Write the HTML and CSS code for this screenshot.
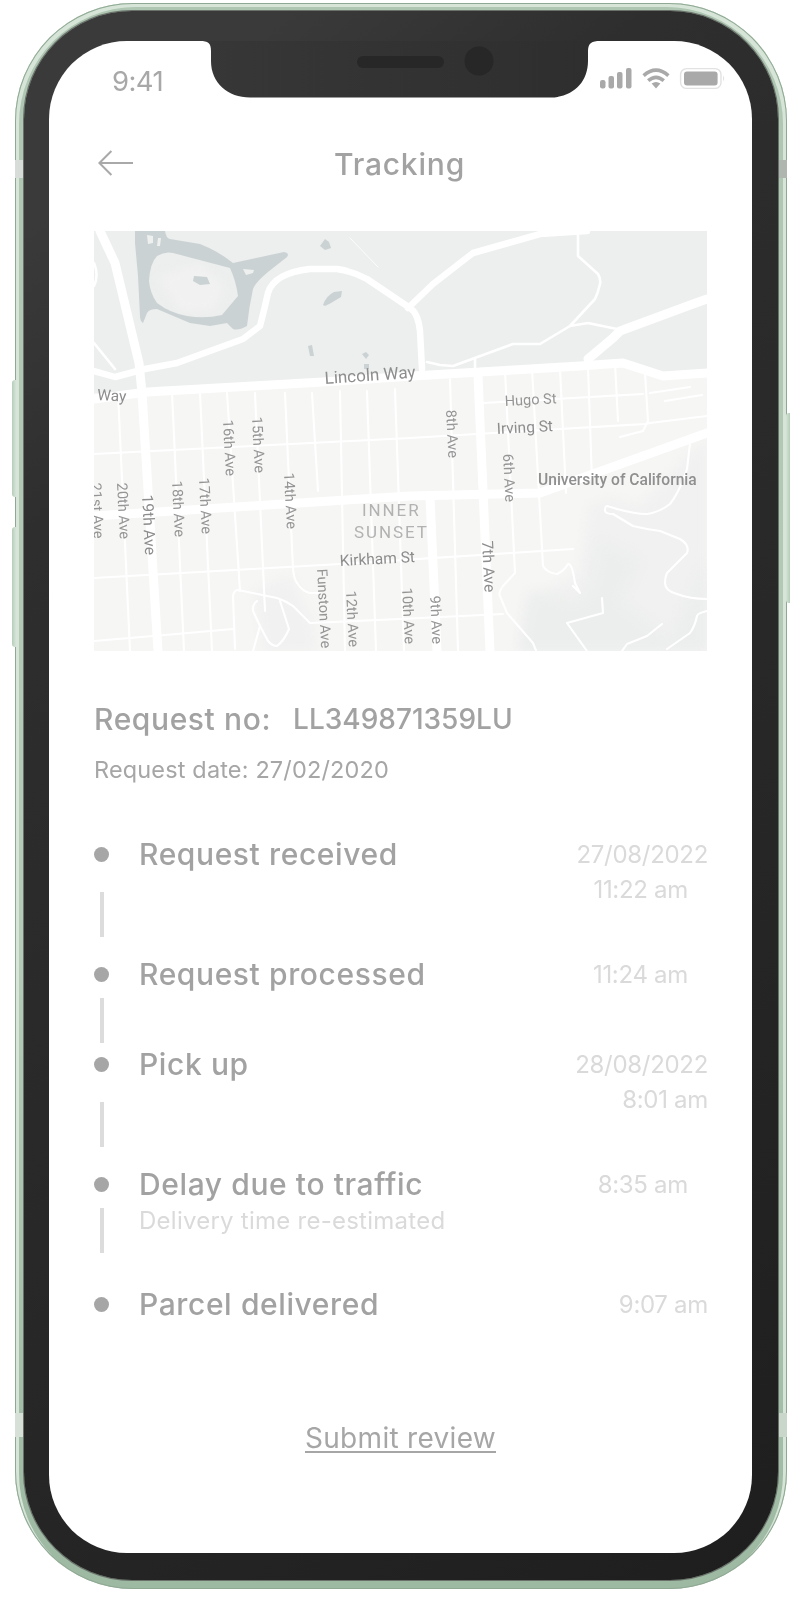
FILE: index.html
```html
<!DOCTYPE html>
<html lang="en">
<head>
<meta charset="utf-8">
<title>Tracking</title>
<link rel="stylesheet" href="styles.css">
</head>
<body>
<div class="phone">
  <span class="btn btn-l1"></span>
  <span class="btn btn-l2"></span>
  <span class="btn btn-r1"></span>
  <span class="band band-lt"></span>
  <span class="band band-lb"></span>
  <span class="band band-rt"></span>
  <span class="band band-rb"></span>
  <div class="bezel">
    <div class="screen">
      <svg class="notch" viewBox="200 40 400 58" width="400" height="58" aria-hidden="true">
        <defs>
          <linearGradient id="ng" x1="0" x2="1" y1="0" y2="0">
            <stop offset="0" stop-color="#373737"/>
            <stop offset="1" stop-color="#2e2e2e"/>
          </linearGradient>
        </defs>
        <path fill="url(#ng)" d="M200 40 H600 C592 40 588 42 588 50 V60 C588 82 572 96.5 550 96.5 H250 C228 96.5 211 82 211 60 V50 C211 42 208 40 200 40 Z"/>
        <rect x="357" y="55" width="87" height="12" rx="6" fill="#272727"/>
        <circle cx="479" cy="60" r="14.5" fill="#272727"/>
      </svg>

      <div class="status">
        <span class="clock">9:41</span>
        <svg class="status-icons" viewBox="600 66 126 24" width="126" height="24" aria-hidden="true">
          <g class="ico-fill">
            <rect x="600" y="80" width="5.5" height="8.5" rx="2.2"/>
            <rect x="608.5" y="76" width="5.5" height="12.5" rx="2"/>
            <rect x="617" y="72" width="5.5" height="16.5" rx="2"/>
            <rect x="626" y="68" width="5.5" height="20.5" rx="2"/>
            <path d="M651.6 83.6 Q656 80.6 660.4 83.6 L656 88.6 Z"/>
          </g>
          <g class="ico-stroke">
            <path d="M643.6 75.6 Q656 64.8 668.4 75.6"/>
            <path d="M648.2 80.6 Q656 74 663.8 80.6"/>
          </g>
          <rect class="batt-shell" x="680.6" y="68.6" width="40.4" height="19.8" rx="6"/>
          <rect class="ico-fill" x="684" y="71.6" width="33.6" height="13.8" rx="3"/>
          <path class="batt-nub" d="M723 75.6 Q725.4 78.5 723 81.4 Z"/>
        </svg>
      </div>

      <header class="topbar">
        <svg class="back" viewBox="0 0 36 26" width="36" height="26" aria-hidden="true">
          <path d="M35 13 H1.4 M13.4 1 L1.4 13 L13.4 25"/>
        </svg>
        <h1 class="title">Tracking</h1>
      </header>

      <svg class="map" viewBox="94 230 613 420" width="613" height="420" role="img" aria-label="Map">
        <rect class="m-park" x="94" y="230" width="613" height="420"/>
        <path class="m-land" d="M94 392 L147 391 L323 381 L413 375 L580 365 L623 362 L663 375 L707 372 V650 H94 Z"/>
        <path class="m-hill" d="M590 505 L612 498 L640 505 L690 452 L707 440 V650 H520 L528 600 L580 572 Z"/>
        <path class="m-hill2" d="M600 540 L640 560 L620 600 L670 640 L707 560 V650 H560 L545 620 L590 590 Z M530 590 L570 600 L590 620 L560 650 H520 Z"/>
        <path class="m-hill" d="M255 590 L290 576 L312 620 L315 650 L265 650 Z"/>
        <path class="m-hill" d="M157 275 L200 262 L225 285 L215 310 L180 312 Z"/>

        <path class="m-water" fill-rule="evenodd" d="M135 230 L165 230 Q166 237 170 238 L200 243 Q218 250 233 262 L284 251 Q290 252 287 256 L273 267 Q256 280 253 288 Q249 306 247 325 Q238 330 233 328 L227 322 L210 325 L190 322 L157 308 Q149 308 147 312 L143 322 Q140 320 140 315 L138 275 L135 242 Z M149 280 Q150 262 157 255 Q165 250 173 252 L230 267 Q236 280 238 295 L222 314 Q205 318 187 315 Q170 312 157 302 Q150 292 149 280 Z"/>
        <path class="m-water" d="M194 275 L207 276 L210 283 L200 284 L193 280 Z M323 304 Q326 295 334 291 L342 290 L341 296 L331 302 L325 305 Z M308 345 L312 344 L314 355 L310 355 Z M362 353 L366 351 L369 354 L366 358 Z M364 363 L369 363 L369 368 L364 368 Z M325 238 L329 241 L331 247 L325 249 L320 245 Z"/>
        <path class="m-hole" d="M147 234 L153 235 L153 242 L148 243 Z M158 237 L161 237 L160 245 L157 245 Z M243 268 L254 269 L253 272 L246 274 Z"/>

        <g class="r-thin">
          <path d="M94 342 L115 368"/>
          <path d="M94 262 Q99 274 94 285"/>
          <path d="M578 230 V255 L598 273 Q601 278 600 283 Q598 292 595 298 L570 325 L540 343 L513 343 L453 365 L440 364 L427 361"/>
          <path d="M570 325 L588 322 L617 328"/>
          <path d="M475 358 V366"/>
        </g>
        <path class="r-hair" d="M350 237 L378 266"/>
        <g class="r-mid">
          <path d="M94 370 L115 376 L145 368 L177 362 L243 338 L260 325 Q264 310 268 292 Q274 272 310 268 H337 Q352 270 367 278 L410 307 Q418 312 420 330 L422 368"/>
          <path d="M408 307 L433 283 L460 262 L473 252 L540 233 L587 230"/>
        </g>
        <g class="r-avenue">
          <path d="M118 392 L130 650"/>
          <path d="M172 392 L184 650"/>
          <path d="M200 392 L212 650"/>
          <path d="M227 392 L240 590"/>
          <path d="M255 392 L265 610"/>
          <path d="M285 392 L293 568 Q294 578 297 582 Q303 591 310 592 L320 592"/>
          <path d="M312 392 L318 490"/>
          <path d="M340 390 L345 650"/>
          <path d="M367 390 L376 650"/>
          <path d="M395 388 L404 650"/>
          <path d="M450 378 L458 650"/>
          <path d="M505 370 L515 572 L503 585 Q498 592 500 595 L507 612 L533 642 L537 652"/>
          <path d="M532 368 L543 565 Q547 572 557 573 Q564 570 568 563 Q572 562 575 582 L580 592 L573 585"/>
          <path d="M560 368 L566 492"/>
          <path d="M588 366 L592 480"/>
          <path d="M615 362 L618 420"/>
          <path d="M645 372 L648 420 L643 430 L620 436"/>
          <path d="M483 402 L643 393"/>
          <path d="M94 453 L410 437 L560 428 L645 423 L650 422 L707 415"/>
          <path d="M94 577 L340 563 L573 548"/>
          <path d="M94 640 L165 634 L233 628"/>
          <path d="M310 622 L400 618 L503 613"/>
          <path d="M235 648 L233 595 Q234 589 238 589 L277 597 Q286 600 293 605 L310 622"/>
          <path d="M257 600 Q252 604 253 610 L260 625 L253 650"/>
          <path d="M280 600 L289 628 Q284 640 277 645 Q272 645 268 640 L260 625"/>
          <path d="M707 598 Q690 598 677 593 Q665 590 665 582 Q665 576 667 572 L687 552 Q690 544 680 538 L660 530 Q645 528 633 525 L613 513 Q606 513 605 510 Q605 505 607 505 L617 508 Q635 513 647 513 Q660 511 670 503 Q680 490 687 468 L690 442"/>
          <path d="M602 597 L603 612 L567 622 L587 650"/>
          <path d="M662 623 L647 635 L627 643 L622 650"/>
          <path d="M707 610 Q698 612 697 615 Q695 625 690 632 L667 648"/>
          <path d="M650 392 L690 386"/>
          <path d="M665 400 L702 394"/>
        </g>
        <g class="r-wide">
          <path d="M100 230 L115 262 L139 362 L142 392 L158 650"/>
          <path d="M94 515 L410 495 L540 492 L707 432"/>
          <path d="M430 497 L437 650"/>
          <path d="M478 375 L490 650"/>
          <path d="M94 398 L147 391 L323 381 L413 375 L580 365 L623 362 L663 375 L707 372"/>
          <path d="M588 358 L613 337 L620 330 L693 303 L707 298"/>
        </g>

        <g class="lbl">
          <text transform="translate(325 383) rotate(-4)" class="lbl-lg">Lincoln Way</text>
          <text transform="translate(97 399) rotate(3)">Way</text>
          <text transform="translate(505 405) rotate(-3)" class="lbl-sm">Hugo St</text>
          <text transform="translate(497 433) rotate(-3)">Irving St</text>
          <text x="538" y="484" class="lbl-strong">University of California</text>
          <text transform="translate(340 565) rotate(-3)">Kirkham St</text>
          <text x="362" y="515" class="lbl-area">INNER</text>
          <text x="354" y="537" class="lbl-area">SUNSET</text>
          <text transform="translate(223 419) rotate(87)" class="lbl-sm">16th Ave</text>
          <text transform="translate(252 416) rotate(87)" class="lbl-sm">15th Ave</text>
          <text transform="translate(284 472) rotate(87)" class="lbl-sm">14th Ave</text>
          <text transform="translate(446 409) rotate(87)" class="lbl-sm">8th Ave</text>
          <text transform="translate(503 453) rotate(87)" class="lbl-sm">6th Ave</text>
          <text transform="translate(199 477) rotate(87)" class="lbl-sm">17th Ave</text>
          <text transform="translate(172 480) rotate(87)" class="lbl-sm">18th Ave</text>
          <text transform="translate(142 494) rotate(87)">19th Ave</text>
          <text transform="translate(117 482) rotate(87)" class="lbl-sm">20th Ave</text>
          <text transform="translate(91 482) rotate(87)" class="lbl-sm">21st Ave</text>
          <text transform="translate(317 568) rotate(87)" class="lbl-sm">Funston Ave</text>
          <text transform="translate(346 590) rotate(87)" class="lbl-sm">12th Ave</text>
          <text transform="translate(402 587) rotate(87)" class="lbl-sm">10th Ave</text>
          <text transform="translate(430 595) rotate(87)" class="lbl-sm">9th Ave</text>
          <text transform="translate(482 540) rotate(87)">7th Ave</text>
        </g>
      </svg>

      <div class="req-no"><span class="req-label">Request no:</span><span>LL349871359LU</span></div>
      <p class="req-date">Request date: 27/02/2020</p>

      <ol class="steps">
        <li class="step step-a">
          <div class="rail"><span class="dot"></span><span class="line gap-l"></span></div>
          <div class="body"><div class="step-title">Request received</div></div>
          <div class="time"><div>27/08/2022</div><div class="inset">11:22 am</div></div>
        </li>
        <li class="step step-b">
          <div class="rail"><span class="dot"></span><span class="line"></span></div>
          <div class="body"><div class="step-title">Request processed</div></div>
          <div class="time"><div class="inset">11:24 am</div></div>
        </li>
        <li class="step step-a">
          <div class="rail"><span class="dot"></span><span class="line gap-l"></span></div>
          <div class="body"><div class="step-title">Pick up</div></div>
          <div class="time"><div>28/08/2022</div><div>8:01 am</div></div>
        </li>
        <li class="step step-a">
          <div class="rail"><span class="dot"></span><span class="line"></span></div>
          <div class="body">
            <div class="step-title">Delay due to traffic</div>
            <div class="step-sub">Delivery time re-estimated</div>
          </div>
          <div class="time"><div class="inset">8:35 am</div></div>
        </li>
        <li class="step">
          <div class="rail"><span class="dot"></span></div>
          <div class="body"><div class="step-title">Parcel delivered</div></div>
          <div class="time"><div>9:07 am</div></div>
        </li>
      </ol>

      <a class="review" href="#">Submit review</a>
    </div>
  </div>
</div>
</body>
</html>
```

FILE: styles.css
```css
* { box-sizing: border-box; }
html, body { margin: 0; padding: 0; background: #fff; }
body {
  width: 799px;
  height: 1599px;
  overflow: hidden;
  font-family: "Inter", "Liberation Sans", sans-serif;
  color: #a8a8a8;
}

/* device */
.phone {
  position: relative;
  width: 772px;
  height: 1586px;
  margin: 3px 0 0 15px;
  padding: 8px 9px 9px 9px;
  border-radius: 118px;
  background: linear-gradient(180deg, #aec6b2 0%, #b3cbb7 60%, #9db9a2 100%);
  box-shadow: inset 0 0 0 1px #8fa893, inset 3px 3px 0 1px #d6e5d8, inset -3px 3px 0 1px #d6e5d8;
}
.bezel {
  height: 100%;
  padding: 29.5px 26px 27px 25px;
  border-radius: 108px;
  background: linear-gradient(140deg, #3a3a3a 10%, #2e2e2e 24%, #272727 62%, #1e1e1e 100%);
  box-shadow: 0 0 0 1px #6a716b;
}
.btn {
  position: absolute;
  width: 4px;
  background: linear-gradient(90deg, #b5cdb9, #d6e4d7);
}
.btn-l1 { left: -3px; top: 377px; height: 117px; border-radius: 3px 0 0 3px; }
.btn-l2 { left: -3px; top: 524px; height: 120px; border-radius: 3px 0 0 3px; }
.btn-r1 { right: -3px; top: 410px; height: 190px; border-radius: 0 3px 3px 0; transform: scaleX(-1); }
.band { position: absolute; width: 8px; }
.band-lt { left: 0; top: 157px; height: 18px; background: #d8dcd8; }
.band-lb { left: 0; top: 1410px; height: 24px; background: #d6e0d7; }
.band-rt { right: 0; top: 157px; height: 18px; background: #aeb6af; }
.band-rb { right: 0; top: 1410px; height: 24px; background: #c9d6ca; }

.screen {
  position: relative;
  height: 100%;
  padding: 0 45px;
  border-radius: 78px;
  background: #fff;
  overflow: hidden;
  filter: blur(0.3px);
}
.notch { position: absolute; left: 151px; top: 0; }

/* status bar */
.status {
  display: flex;
  justify-content: space-between;
  align-items: flex-start;
  height: 60px;
  margin: 0 -19px 0 18px;
}
.clock {
  margin-top: 24px;
  font-size: 27.5px;
  line-height: 33px;
  letter-spacing: -0.6px;
}
.status-icons { margin-top: 25px; }
.ico-fill { fill: #a9a9a9; }
.ico-stroke { fill: none; stroke: #a9a9a9; stroke-width: 3.6; }
.batt-shell { fill: none; stroke: #e2e2e2; stroke-width: 1.4; }
.batt-nub { fill: #e2e2e2; }

/* header */
.topbar {
  position: relative;
  display: flex;
  justify-content: center;
  align-items: center;
  height: 40px;
  margin-top: 43px;
}
.back {
  position: absolute;
  left: 4px;
  top: 6px;
  fill: none;
  stroke: #a9a9a9;
  stroke-width: 2;
}
.title {
  margin: 0 2px 0 0;
  font-size: 30px;
  line-height: 40px;
  font-weight: 500;
  color: #a2a2a2;
  letter-spacing: 0.8px;
}

/* map */
.map {
  display: block;
  margin-top: 47px;
  filter: blur(0.3px);
}
.m-park { fill: #edeeee; }
.m-land { fill: #f6f6f5; }
.m-hill { fill: #f0f1f0; filter: blur(5px); }
.m-hill2 { fill: #ecEeed; filter: blur(6px); }
.m-water { fill: #cbd2d3; }
.m-hole { fill: #eef0ef; }
.r-wide, .r-mid, .r-thin, .r-avenue, .r-hair { fill: none; stroke: #fff; stroke-linejoin: round; stroke-linecap: round; }
.r-wide { stroke-width: 9; }
.r-mid { stroke-width: 6.5; }
.r-thin { stroke-width: 2.6; }
.r-avenue { stroke-width: 2.1; }
.r-hair { stroke-width: 1; opacity: 0.8; }
.lbl text {
  font-family: "Roboto", "Liberation Sans", sans-serif;
  font-size: 15.5px;
  fill: #8d8d8d;
}
.lbl .lbl-lg { font-size: 17px; }
.lbl .lbl-sm { font-size: 14.5px; fill: #959595; }
.lbl .lbl-strong { font-size: 15.6px; font-weight: 500; fill: #8f8f8f; }
.lbl .lbl-area { font-size: 17px; letter-spacing: 1.9px; fill: #b2b2b2; }

/* request */
.req-no {
  display: flex;
  gap: 22px;
  margin-top: 48px;
  font-size: 28px;
  line-height: 40px;
  font-weight: 500;
  color: #a2a2a2;
}
.req-label { font-size: 30px; letter-spacing: 0.6px; }
.req-date {
  margin: 16px 0 0;
  font-size: 23.5px;
  line-height: 30px;
  letter-spacing: 0.15px;
  color: #a6a6a6;
}

/* timeline */
.steps {
  margin: 52px 0 0;
  padding: 0;
  list-style: none;
}
.step {
  display: grid;
  grid-template-columns: 45px 1fr 170px;
  height: 120px;
}
.step-b { height: 90px; }
.rail { display: flex; flex-direction: column; padding-top: 10px; }
.dot { width: 15px; height: 15px; border-radius: 50%; background: #a6a6a6; }
.line { width: 4px; height: 45px; margin: 16px 0 0 5.5px; background: #dcdcdc; }
.line.gap-l { margin-top: 30px; }
.step-title {
  font-size: 30px;
  line-height: 35px;
  font-weight: 500;
  letter-spacing: 0.6px;
  color: #a2a2a2;
}
.step-sub {
  margin-top: 4px;
  font-size: 24px;
  line-height: 30px;
  letter-spacing: 0.25px;
  color: #dadada;
}
.time {
  margin-right: -1px;
  font-size: 24px;
  line-height: 35px;
  letter-spacing: -0.3px;
  color: #dadada;
  text-align: right;
  white-space: nowrap;
}
.inset { padding-right: 20px; }

/* review */
.review {
  display: block;
  margin-top: 13px;
  font-size: 28px;
  line-height: 36px;
  letter-spacing: 0.3px;
  color: #a6a6a6;
  text-align: center;
  text-decoration: underline;
  text-decoration-thickness: 1.5px;
  text-underline-offset: 3px;
}
```
